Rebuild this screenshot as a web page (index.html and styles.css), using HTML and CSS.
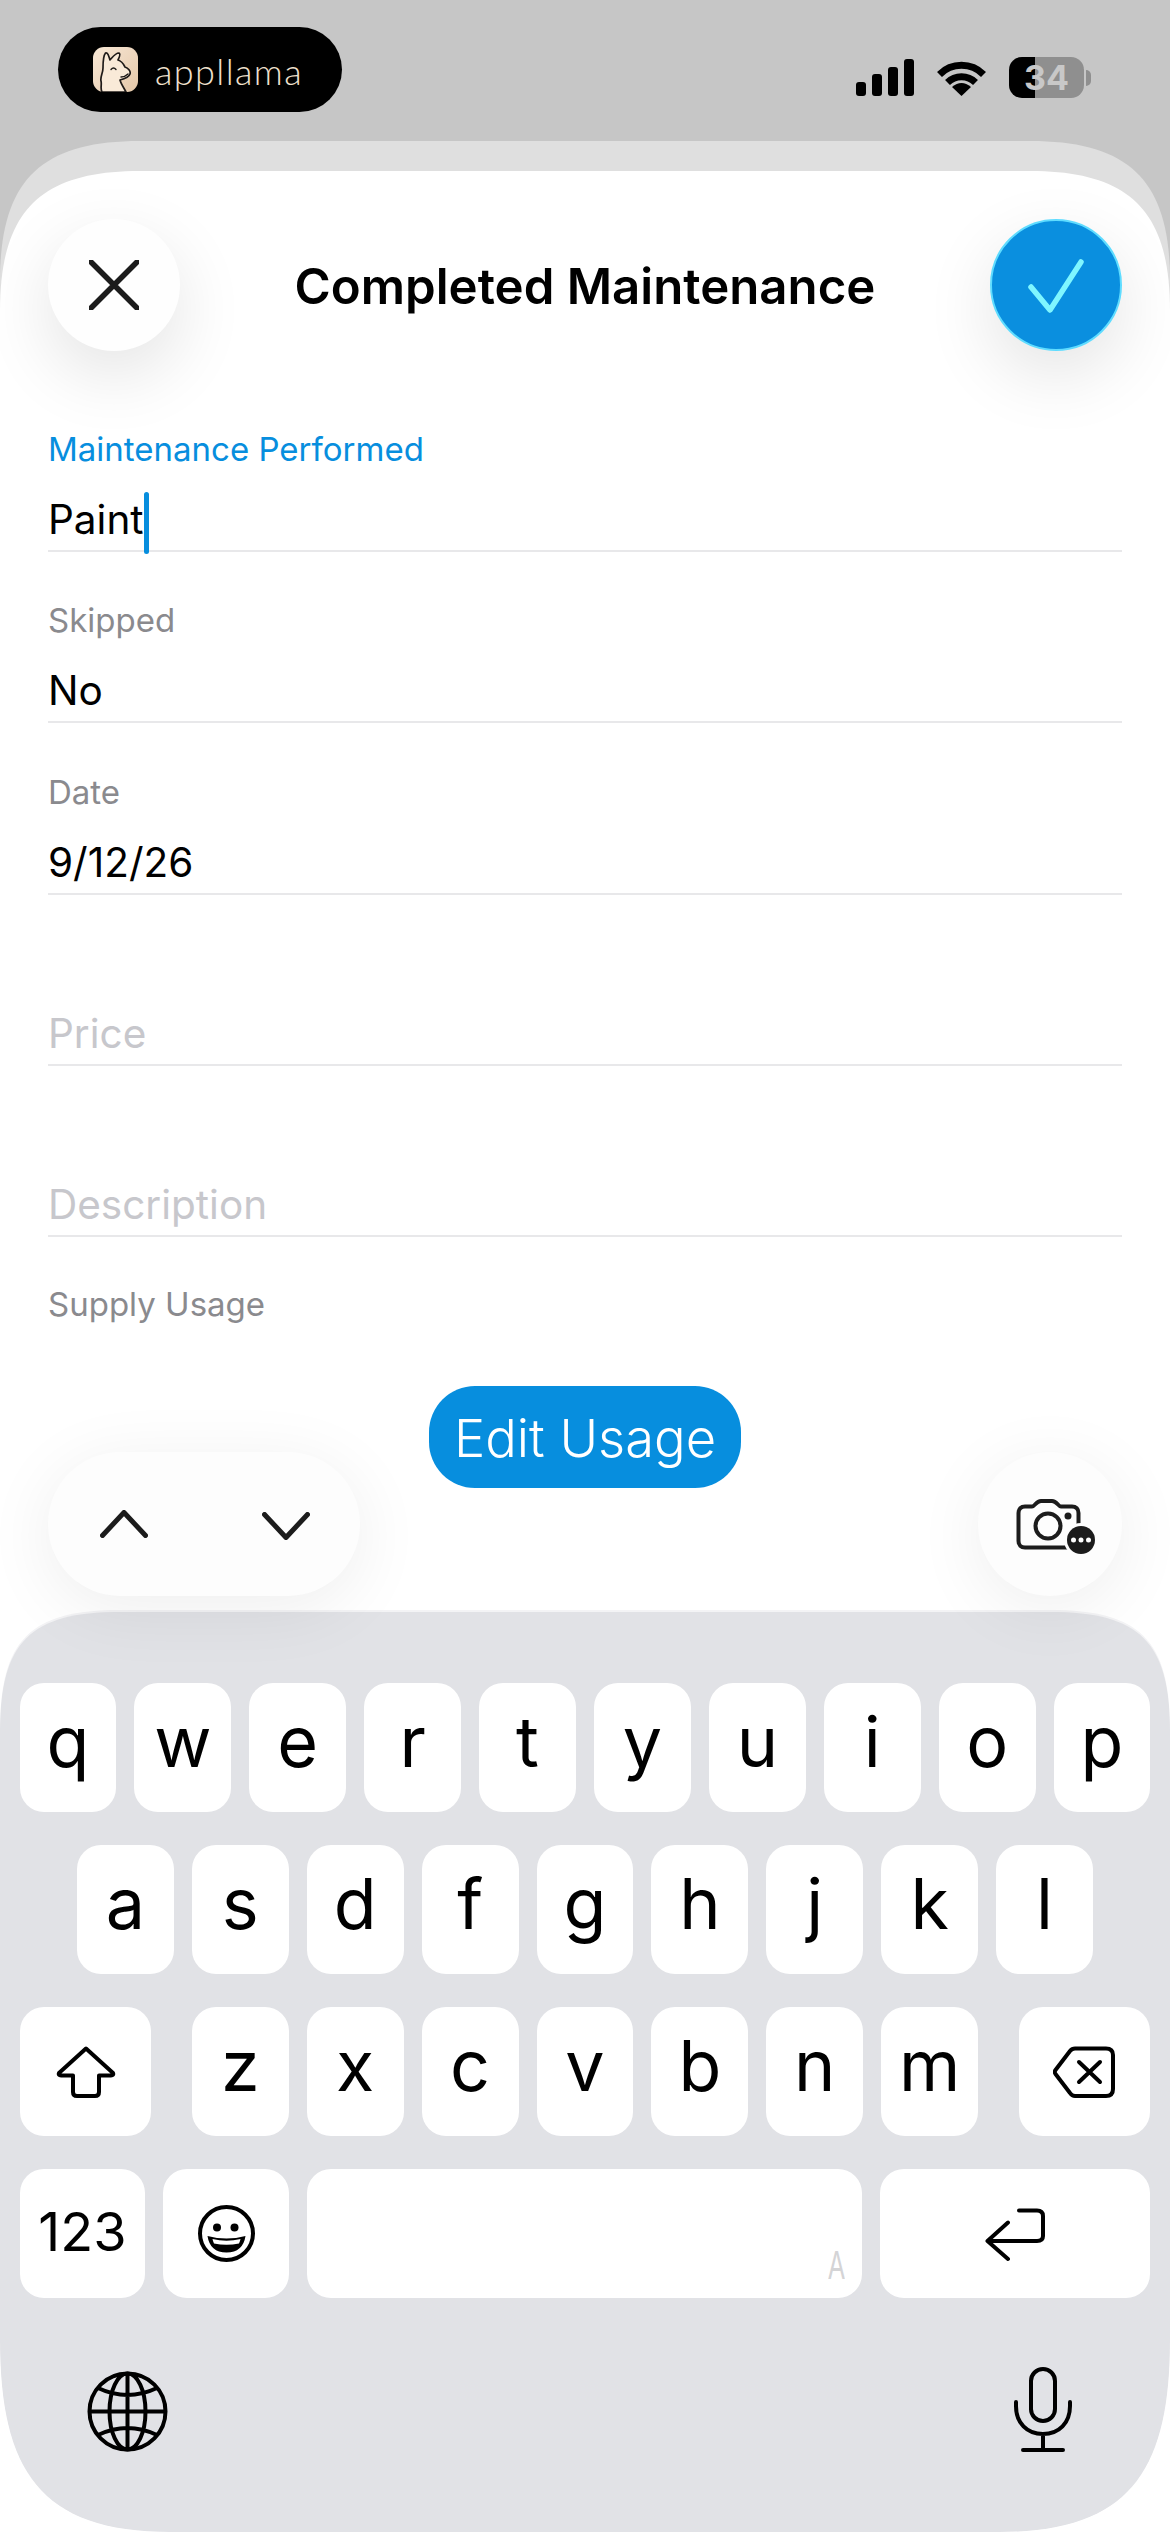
FILE: index.html
```html
<!DOCTYPE html>
<html lang="en">
<head>
  <meta charset="UTF-8">
  <meta name="viewport" content="width=device-width, initial-scale=1.0">
  <title>Completed Maintenance</title>
  <link rel="stylesheet" href="styles.css">
</head>
<body>
  <!-- Status bar -->
  <div class="status-bar">
    <div class="brand">
      <svg class="brand-icon" width="45" height="45" viewBox="0 0 45 45">
        <defs>
          <linearGradient id="tile" x1="0" y1="0" x2="1" y2="1">
            <stop offset="0" stop-color="#f8e8d6"/>
            <stop offset="1" stop-color="#e4c7a8"/>
          </linearGradient>
        </defs>
        <rect width="45" height="45" rx="11" fill="url(#tile)"/>
        <path d="M9 45C7 41 9 38 8 34C7 30 10 26 10 21C10 15 10 9 12.5 6C15 5 16 10 17 13C19 11 22 6 26 6C28 7 26 11 25 13C29 14 31 18 32 20C35 21 38 24 37 27C36 30 31 32 27 33C28 37 31 41 33 45Z" fill="#f9ead8" stroke="#1f1b19" stroke-width="1.7" stroke-linejoin="round"/>
        <path d="M18 22.5Q20.5 19.5 23 22.5M28 30Q32 30 35 27" fill="none" stroke="#1f1b19" stroke-width="1.4" stroke-linecap="round"/>
      </svg>
      <span class="brand-name">appllama</span>
    </div>
    <div class="status-icons">
      <svg width="58" height="37" viewBox="0 0 58 37">
        <rect x="0" y="23" width="10" height="14" rx="3"/>
        <rect x="16" y="15" width="10" height="22" rx="3"/>
        <rect x="32" y="8" width="10" height="29" rx="3"/>
        <rect x="48" y="0" width="10" height="37" rx="3"/>
      </svg>
      <svg width="49" height="37" viewBox="0 0 49 37">
        <path d="M2.5 15.5A31 31 0 0 1 46.5 15.5M10.5 23.5A20 20 0 0 1 38.5 23.5" fill="none" stroke="#000" stroke-width="7"/>
        <path d="M24.5 37L15 28Q24.5 20 34 28Z"/>
      </svg>
      <div class="battery"><span>34</span></div>
    </div>
  </div>

  <div class="sheet-back">
    <div class="sheet">
      <header class="sheet-header">
        <button class="round-btn">
          <svg width="50" height="50" viewBox="0 0 50 50"><path d="M2 2L48 48M48 2L2 48" stroke="#1c1c1c" stroke-width="5.5" stroke-linecap="round"/></svg>
        </button>
        <h1>Completed Maintenance</h1>
        <button class="round-btn confirm">
          <svg width="56" height="56" viewBox="0 0 56 56"><path d="M3 30L22 53L53 5" fill="none" stroke="#7ff6ff" stroke-width="5.5" stroke-linecap="round" stroke-linejoin="round"/></svg>
        </button>
      </header>

      <form class="form">
        <div class="field">
          <div class="field-label active">Maintenance Performed</div>
          <div class="field-value">Paint<i class="caret"></i></div>
        </div>
        <div class="field">
          <div class="field-label">Skipped</div>
          <div class="field-value">No</div>
        </div>
        <div class="field">
          <div class="field-label">Date</div>
          <div class="field-value">9/12/26</div>
        </div>
        <div class="field">
          <div class="field-value empty">Price</div>
        </div>
        <div class="field">
          <div class="field-value empty">Description</div>
        </div>
        <div class="field-label usage-label">Supply Usage</div>
        <button type="button" class="edit-usage">Edit Usage</button>
      </form>

      <div class="accessories">
        <div class="stepper">
          <svg width="48" height="28" viewBox="0 0 48 28"><path d="M2.5 25.5L24 2.5L45.5 25.5" fill="none" stroke="#1c1c1c" stroke-width="5" stroke-linecap="round" stroke-linejoin="round"/></svg>
          <svg class="chevron-down" width="48" height="28" viewBox="0 0 48 28"><path d="M2.5 2.5L24 25.5L45.5 2.5" fill="none" stroke="#1c1c1c" stroke-width="5" stroke-linecap="round" stroke-linejoin="round"/></svg>
        </div>
        <button class="camera-btn">
          <svg width="80" height="60" viewBox="0 0 80 60">
            <path d="M10 9.5H17C20 9.5 21 4 26 4H37C42 4 43 9.5 46 9.5H57C61 9.5 63.5 12 63.5 16V44C63.5 48 61 50.5 57 50.5H10C6 50.5 3.5 48 3.5 44V16C3.5 12 6 9.5 10 9.5Z" fill="none" stroke="#1c1c1c" stroke-width="4"/>
            <circle cx="33" cy="29" r="12.5" fill="none" stroke="#1c1c1c" stroke-width="4"/>
            <circle cx="53" cy="19" r="3.5" fill="#1c1c1c"/>
            <circle cx="66" cy="43" r="17" fill="#fdfdfd"/>
            <circle cx="66" cy="43" r="14" fill="#1c1c1c"/>
            <circle cx="58.5" cy="43" r="2.5" fill="#fff"/>
            <circle cx="66" cy="43" r="2.5" fill="#fff"/>
            <circle cx="73.5" cy="43" r="2.5" fill="#fff"/>
          </svg>
        </button>
      </div>

      <!-- Keyboard -->
      <div class="keyboard">
        <div class="key-row">
          <div class="key">q</div><div class="key">w</div><div class="key">e</div><div class="key">r</div><div class="key">t</div>
          <div class="key">y</div><div class="key">u</div><div class="key">i</div><div class="key">o</div><div class="key">p</div>
        </div>
        <div class="key-row">
          <div class="key">a</div><div class="key">s</div><div class="key">d</div><div class="key">f</div><div class="key">g</div>
          <div class="key">h</div><div class="key">j</div><div class="key">k</div><div class="key">l</div>
        </div>
        <div class="key-row spread">
          <div class="key wide-side">
            <svg width="60" height="52" viewBox="0 0 60 52"><path d="M30 2.5L3 27Q2 29.5 5 29.5H17V46Q17 50 21 50H39Q43 50 43 46V29.5H55Q58 29.5 57 27Z" fill="none" stroke="#000" stroke-width="4" stroke-linejoin="round"/></svg>
          </div>
          <div class="letter-group">
            <div class="key">z</div><div class="key">x</div><div class="key">c</div><div class="key">v</div><div class="key">b</div><div class="key">n</div><div class="key">m</div>
          </div>
          <div class="key wide-side">
            <svg width="62" height="52" viewBox="0 0 62 52">
              <path d="M22 2.5H53Q60 2.5 60 9V43Q60 50 53 50H22Q19 50 17 47L2.5 28Q1 26 2.5 24L17 5Q19 2.5 22 2.5Z" fill="none" stroke="#000" stroke-width="4" stroke-linejoin="round"/>
              <path d="M26 16L47 36M47 16L26 36" stroke="#000" stroke-width="4" stroke-linecap="round"/>
            </svg>
          </div>
        </div>
        <div class="key-row bottom-row">
          <div class="key numbers">123</div>
          <div class="key emoji">
            <svg width="57" height="57" viewBox="0 0 57 57">
              <circle cx="28.5" cy="28.5" r="26.5" fill="none" stroke="#000" stroke-width="4"/>
              <circle cx="19" cy="22.5" r="4"/>
              <circle cx="36.5" cy="22.5" r="4"/>
              <path d="M9.5 31Q28.5 36 47.5 31Q45 47.5 28.5 47.5Q12 47.5 9.5 31Z"/>
              <path d="M14.5 34Q28.5 37.5 42.5 34Q42 36.5 41 38.5Q28.5 41 16 38.5Q15 36.5 14.5 34Z" fill="#fff"/>
            </svg>
          </div>
          <div class="key space"><span class="space-mark">A</span></div>
          <div class="key return">
            <svg width="62" height="56" viewBox="0 0 62 56"><path d="M35 4.5H53Q59 4.5 59 10V30Q59 35 53 35H3.5M24 16.5L3.5 35L24 53" fill="none" stroke="#000" stroke-width="4" stroke-linecap="round" stroke-linejoin="round"/></svg>
          </div>
        </div>
        <div class="kb-footer">
          <svg width="81" height="81" viewBox="0 0 81 81" fill="none" stroke="#000" stroke-width="4">
            <circle cx="40.5" cy="40.5" r="38"/>
            <ellipse cx="40.5" cy="40.5" rx="18" ry="38"/>
            <path d="M40.5 2.5V78.5M2.5 40.5H78.5M11 17Q40.5 31 70 17M11 64Q40.5 50 70 64"/>
          </svg>
          <svg width="62" height="86" viewBox="0 0 62 86" fill="none" stroke="#000" stroke-width="4" stroke-linecap="round">
            <rect x="19" y="3" width="24" height="52" rx="12"/>
            <path d="M4 36V40C4 57 15 68 31 68C47 68 58 57 58 40V36M31 68V84M11 84H51"/>
          </svg>
        </div>
      </div>
    </div>
  </div>
</body>
</html>
```

FILE: styles.css
```css
* {
  box-sizing: border-box;
}
body {
  margin: 0;
  width: 1170px;
  height: 2532px;
  overflow: hidden;
  background-color: #c6c6c6;
  font-family: Inter, "Noto Sans", sans-serif;
  color: #000;
}
button {
  border: none;
  padding: 0;
  font-family: inherit;
}

/* status bar */
.status-bar {
  height: 141px;
  padding: 27px 86px 0 58px;
  display: flex;
  justify-content: space-between;
  align-items: flex-start;
}
.brand {
  width: 284px;
  height: 85px;
  border-radius: 43px;
  background-color: #000;
  display: flex;
  align-items: center;
  padding: 0 0 0 35px;
  gap: 17px;
}
.brand-name {
  margin-top: 3px;
  font-family: Lato, sans-serif;
  font-weight: 300;
  font-size: 36px;
  line-height: 40px;
  color: #f0e0ce;
  letter-spacing: 1.4px;
}
.status-icons {
  display: flex;
  align-items: flex-start;
  gap: 23px;
  padding-top: 32px;
}
.battery {
  width: 75px;
  height: 41px;
  margin-top: -2px;
  border-radius: 13px;
  background: linear-gradient(to right, #000 34.7%, #8f8f8f 34.7%);
  display: flex;
  align-items: center;
  justify-content: center;
  font-size: 34px;
  font-weight: 700;
  color: #c8c8c8;
  position: relative;
}
.battery::after {
  content: "";
  position: absolute;
  left: 77px;
  top: 13px;
  width: 5px;
  height: 16px;
  border-radius: 0 8px 8px 0;
  background-color: #8f8f8f;
}

/* sheets */
.sheet-back {
  height: 2391px;
  padding-top: 30px;
  background-color: #dfdfdf;
  clip-path: path("M0 140C0 40 40 0 140 0H1030C1130 0 1170 40 1170 140V2391H0Z");
}
.sheet {
  height: 2361px;
  display: flex;
  flex-direction: column;
  background-color: #fff;
  clip-path: path("M0 140C0 40 40 0 140 0H1030C1130 0 1170 40 1170 140V2361H0Z");
}
.sheet-header {
  height: 210px;
  padding: 48px 48px 0;
  display: flex;
  justify-content: space-between;
  align-items: flex-start;
}
.sheet-header h1 {
  margin: 0;
  font-size: 49.2px;
  font-weight: 600;
  line-height: 135px;
}
.round-btn {
  width: 132px;
  height: 132px;
  border-radius: 50%;
  background-color: #fefefe;
  box-shadow: 0 24px 70px rgba(0, 0, 0, 0.11);
  display: flex;
  align-items: center;
  justify-content: center;
}
.confirm {
  background-color: #0a8fdf;
  border: 2px solid #5fdcff;
}

/* form */
.form {
  padding: 0 48px;
  display: flex;
  flex-direction: column;
}
.field {
  height: 171.2px;
  border-bottom: 2px solid #e8e8ea;
  display: flex;
  flex-direction: column;
  justify-content: flex-end;
  padding-bottom: 2px;
}
.field-label {
  margin-bottom: 23px;
  font-size: 33px;
  line-height: 40px;
  color: #8a8a8e;
}
.field-label.active {
  color: #078ede;
}
.field-value {
  display: flex;
  font-size: 40.5px;
  line-height: 56px;
}
.field-value.empty {
  color: #c7c7cc;
}
.caret {
  align-self: flex-end;
  width: 5px;
  height: 62px;
  margin-bottom: -6px;
  border-radius: 3px;
  background-color: #078ede;
}
.usage-label {
  margin: 47px 0 0;
}
.edit-usage {
  align-self: center;
  width: 312px;
  height: 102px;
  margin-top: 62px;
  padding-top: 2px;
  border-radius: 46px;
  background-color: #078ede;
  color: #fff;
  font-size: 52.5px;
  font-weight: 300;
}

/* buttons above the keyboard */
.accessories {
  position: relative;
  z-index: 1;
  margin-top: -36px;
  padding: 0 48px;
  display: flex;
  justify-content: space-between;
}
.stepper {
  width: 312px;
  height: 144px;
  padding-left: 52px;
  border-radius: 72px;
  background-color: #fdfdfd;
  box-shadow: 0 12px 70px rgba(0, 0, 0, 0.07);
  display: flex;
  align-items: center;
  gap: 114px;
}
.chevron-down {
  margin-top: 4px;
}
.camera-btn {
  width: 144px;
  height: 144px;
  padding: 6px 0 0 10px;
  border-radius: 50%;
  background-color: #fdfdfd;
  box-shadow: 0 12px 70px rgba(0, 0, 0, 0.07);
  display: flex;
  align-items: center;
  justify-content: center;
}

/* keyboard */
.keyboard {
  margin-top: auto;
  height: 922px;
  padding: 73px 20px 0;
  background-color: #f3f3f5;
  clip-path: path("M0 120C0 30 30 0 120 0H1050C1140 0 1170 30 1170 120V730C1170 860 1130 922 1000 922H170C40 922 0 860 0 730Z");
  display: flex;
  flex-direction: column;
  gap: 33px;
  position: relative;
}
/* the panel itself, 2px lower so a light rim shows along the top */
.keyboard::before {
  content: "";
  position: absolute;
  inset: 0;
  z-index: -1;
  background-color: #e1e2e6;
  clip-path: path("M0 122C0 32 30 2 120 2H1050C1140 2 1170 32 1170 122V730C1170 860 1130 922 1000 922H170C40 922 0 860 0 730Z");
}
.key-row {
  display: flex;
  justify-content: center;
  gap: 18px;
}
.key-row.spread {
  justify-content: space-between;
}
.letter-group {
  display: flex;
  gap: 18px;
}
.key {
  flex: 0 0 96.9px;
  height: 129px;
  border-radius: 24px;
  background-color: #fff;
  display: flex;
  align-items: center;
  justify-content: center;
  font-size: 70px;
  line-height: 1;
  padding-bottom: 11px;
}
.key.wide-side {
  flex-basis: 131px;
  padding: 0;
}
.key.numbers {
  flex-basis: 125px;
  font-size: 54px;
  padding-bottom: 3px;
}
.key.emoji {
  flex-basis: 126px;
  padding: 0;
}
.key.space {
  flex-basis: 555px;
  padding: 0 17px 18px 0;
  justify-content: flex-end;
  align-items: flex-end;
}
.space-mark {
  display: inline-block;
  font-family: "Liberation Sans", sans-serif;
  font-size: 40px;
  line-height: 29px;
  color: #d4d4d6;
  transform: scaleX(0.62);
  transform-origin: right center;
}
.key.return {
  flex-basis: 270px;
  padding: 0;
}
.kb-footer {
  margin-top: 35px;
  padding: 0 76px 0 67px;
  display: flex;
  justify-content: space-between;
  align-items: flex-end;
}
```
